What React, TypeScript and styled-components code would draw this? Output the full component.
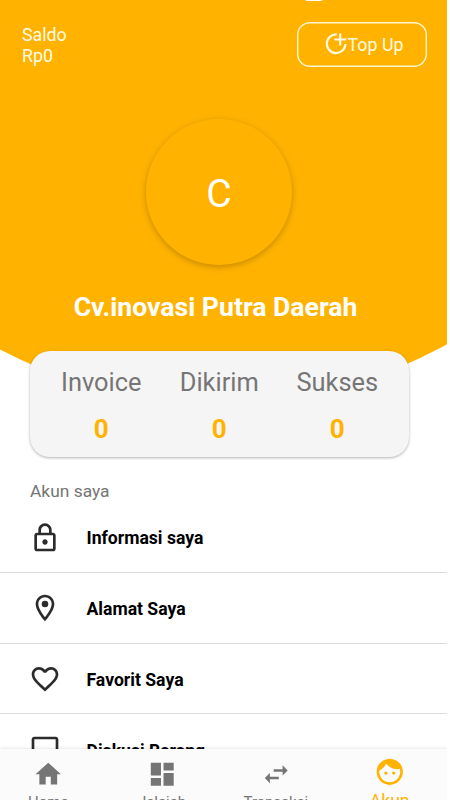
import React from 'react';
import styled, { createGlobalStyle } from 'styled-components';

const amber = '#ffb300';

const GlobalStyle = createGlobalStyle`
  * { box-sizing: border-box; }
  html, body { margin: 0; padding: 0; background: #fff; overflow: hidden; }
  body { font-family: Roboto, "Liberation Sans", sans-serif; }
`;

const Screen = styled.main`
  width: 447px;
  height: 800px;
  display: flex;
  flex-direction: column;
  overflow: hidden;
  background: #fff;
`;

const Content = styled.div`
  flex: 1;
  min-height: 0;
  overflow: hidden;
`;

const Header = styled.header`
  position: relative;
  height: 403px;
  background: ${amber};
  clip-path: circle(470px at 218.5px -66.5px);
  color: #fff;
`;

const Handle = styled.span`
  position: absolute;
  top: -9px;
  left: 304px;
  width: 20px;
  height: 10px;
  border-radius: 4px;
  background: #fff;
`;

const TopBar = styled.div`
  display: flex;
  justify-content: space-between;
  align-items: flex-start;
  height: 67px;
  padding: 22px 20px 0 22px;
  color: #fffbe6;
`;

const Balance = styled.div`
  padding-top: 2px;
  font-size: 17.8px;
  line-height: 21px;
`;

const TopUpButton = styled.button`
  display: flex;
  align-items: center;
  justify-content: center;
  width: 130px;
  height: 44.5px;
  padding: 0 0 0 4px;
  border: 0;
  border-radius: 13px;
  background: transparent;
  box-shadow: inset 0 0 0 1.4px #fff6cf;
  color: inherit;
  font: 400 17.8px Roboto, sans-serif;
`;

const Avatar = styled.div`
  display: grid;
  place-items: center;
  width: 146px;
  height: 146px;
  margin: 52px 0 0 146px;
  border-radius: 50%;
  background: ${amber};
  box-shadow: 0 2px 6px rgba(90, 60, 0, 0.34);
  font-size: 39px;
  padding-top: 4px;
`;

const Name = styled.h1`
  width: 431px;
  margin: 26px 0 0;
  font-size: 26.6px;
  font-weight: 700;
  line-height: 32px;
  text-align: center;
  white-space: nowrap;
`;

const Stats = styled.section`
  position: relative;
  display: grid;
  grid-template-columns: repeat(3, 118px);
  justify-content: center;
  width: 379.5px;
  height: 106.5px;
  margin: -52.5px 0 0 29.5px;
  padding-top: 16px;
  border-radius: 20px;
  background: #f5f5f5;
  box-shadow: 0 1px 3px rgba(0, 0, 0, 0.3);
  text-align: center;
`;

const StatLabel = styled.div`
  color: #757575;
  font-size: 25.4px;
  line-height: 31px;
`;

const StatValue = styled.div`
  margin-top: 16px;
  color: ${amber};
  font-size: 26px;
  font-weight: 700;
  line-height: 31px;
`;

const SectionTitle = styled.h2`
  margin: 24px 0 0 30px;
  color: #757575;
  font-size: 17.4px;
  font-weight: 400;
  line-height: 21px;
`;

const Row = styled.div`
  display: flex;
  align-items: center;
  gap: 25.5px;
  height: 70.8px;
  padding: 1.5px 0 0 29px;
  border-bottom: 1px solid #dcdcdc;
  color: #2b2b2b;
`;

const RowText = styled.span`
  padding-top: 1px;
  color: #000;
  font-size: 17.6px;
  font-weight: 700;
`;

const BottomNav = styled.nav`
  position: relative;
  display: grid;
  grid-template-columns: repeat(4, 113.8px);
  justify-content: start;
  height: 51.5px;
  padding-top: 10px;
  overflow: hidden;
  background: #fbfbfb;
  box-shadow: 0 -1px 3px rgba(0, 0, 0, 0.09);
`;

const NavItem = styled.div<{ $active?: boolean }>`
  display: flex;
  flex-direction: column;
  align-items: center;
  width: 96.5px;
  margin-top: ${(p) => (p.$active ? '-2.5px' : '0')};
  color: ${(p) => (p.$active ? amber : '#757575')};
  font-size: ${(p) => (p.$active ? '17.6px' : '15px')};
  line-height: 20px;

  span { margin-top: 3px; }
`;

const Icon = ({ d, size = 32 }: { d: string; size?: number }) => (
  <svg width={size} height={size} viewBox="0 0 24 24" fill="currentColor" aria-hidden="true">
    <path d={d} />
  </svg>
);

const paths = {
  lock: 'M18 8h-1V6c0-2.76-2.24-5-5-5S7 3.24 7 6v2H6c-1.1 0-2 .9-2 2v10c0 1.1.9 2 2 2h12c1.1 0 2-.9 2-2V10c0-1.1-.9-2-2-2zM9 6c0-1.66 1.34-3 3-3s3 1.34 3 3v2H9V6zm9 14H6V10h12v10zm-6-3c1.1 0 2-.9 2-2s-.9-2-2-2-2 .9-2 2 .9 2 2 2z',
  place: 'M12 2C8.13 2 5 5.13 5 9c0 5.25 7 13 7 13s7-7.75 7-13c0-3.87-3.13-7-7-7zM7 9c0-2.76 2.24-5 5-5s5 2.24 5 5c0 2.88-2.88 7.19-5 9.88C9.92 16.21 7 11.85 7 9zm5-2.5a2.5 2.5 0 1 0 0 5 2.5 2.5 0 0 0 0-5z',
  heart: 'M16.5 3c-1.74 0-3.41.81-4.5 2.09C10.91 3.81 9.24 3 7.5 3 4.42 3 2 5.42 2 8.5c0 3.78 3.4 6.86 8.55 11.54L12 21.35l1.45-1.32C18.6 15.36 22 12.28 22 8.5 22 5.42 19.58 3 16.5 3zm-4.4 15.55l-.1.1-.1-.1C7.14 14.24 4 11.39 4 8.5 4 6.5 5.5 5 7.5 5c1.54 0 3.04.99 3.57 2.36h1.87C13.46 5.99 14.96 5 16.5 5c2 0 3.5 1.5 3.5 3.5 0 2.89-3.14 5.74-7.9 10.05z',
  chat: 'M20 2H4c-1.1 0-2 .9-2 2v18l4-4h14c1.1 0 2-.9 2-2V4c0-1.1-.9-2-2-2zm0 14H5.17L4 17.17V4h16v12z',
  home: 'M10 20v-6h4v6h5v-8h3L12 3 2 12h3v8z',
  dashboard: 'M3 13h8V3H3v10zm0 8h8v-6H3v6zm10 0h8V11h-8v10zm0-18v6h8V3h-8z',
  swap: 'M6.99 11L3 15l3.99 4v-3H14v-2H6.99v-3zM21 9l-3.99-4v3H10v2h7.01v3L21 9z',
  face: 'M9 11.75a1.25 1.25 0 1 0 0 2.5 1.25 1.25 0 0 0 0-2.5zm6 0a1.25 1.25 0 1 0 0 2.5 1.25 1.25 0 0 0 0-2.5zM12 2C6.48 2 2 6.48 2 12s4.48 10 10 10 10-4.48 10-10S17.52 2 12 2zm0 18c-4.41 0-8-3.59-8-8 0-.29.02-.58.05-.86 2.36-1.05 4.23-2.98 5.21-5.37C11.07 8.33 14.05 10 17.42 10c.78 0 1.53-.09 2.25-.26.21.71.33 1.47.33 2.26 0 4.41-3.59 8-8 8z',
};

const TopUpIcon = () => (
  <svg width="23" height="24" viewBox="0 0 23 24" fill="none" stroke="currentColor" strokeWidth="2.2" aria-hidden="true">
    <path d="M11.8 2.5A9.3 9.3 0 1 0 20.4 12M15.2 1.4v12M9.3 7.5h12" />
  </svg>
);

const stats = ['Invoice', 'Dikirim', 'Sukses'];
const rows = [
  { icon: paths.lock, label: 'Informasi saya' },
  { icon: paths.place, label: 'Alamat Saya' },
  { icon: paths.heart, label: 'Favorit Saya' },
  { icon: paths.chat, label: 'Diskusi Barang' },
];
const tabs = [
  { icon: paths.home, label: 'Home' },
  { icon: paths.dashboard, label: 'Jelajah' },
  { icon: paths.swap, label: 'Transaksi' },
  { icon: paths.face, label: 'Akun', active: true },
];

export default function App() {
  return (
    <>
      <GlobalStyle />
      <Screen>
        <Content>
          <Header>
            <Handle />
            <TopBar>
              <Balance>
                <div>Saldo</div>
                <div>Rp0</div>
              </Balance>
              <TopUpButton>
                <TopUpIcon />
                Top Up
              </TopUpButton>
            </TopBar>
            <Avatar>C</Avatar>
            <Name>Cv.inovasi Putra Daerah</Name>
          </Header>
          <Stats>
            {stats.map((label) => (
              <div key={label}>
                <StatLabel>{label}</StatLabel>
                <StatValue>0</StatValue>
              </div>
            ))}
          </Stats>
          <SectionTitle>Akun saya</SectionTitle>
          {rows.map((row) => (
            <Row key={row.label}>
              <Icon d={row.icon} />
              <RowText>{row.label}</RowText>
            </Row>
          ))}
        </Content>
        <BottomNav>
          {tabs.map((tab) => (
            <NavItem key={tab.label} $active={tab.active}>
              <Icon d={tab.icon} size={tab.active ? 31.5 : 30.5} />
              <span>{tab.label}</span>
            </NavItem>
          ))}
        </BottomNav>
      </Screen>
    </>
  );
}
